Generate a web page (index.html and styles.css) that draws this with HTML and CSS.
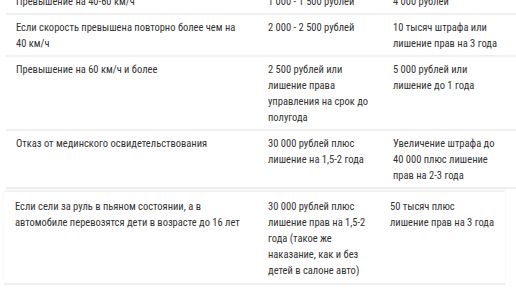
FILE: index.html
```html
<!DOCTYPE html>
<html lang="ru">
<head>
<meta charset="utf-8">
<link rel="stylesheet" href="styles.css">
</head>
<body>
<div class="page">
  <table class="fines fines-main">
    <colgroup><col class="c1"><col class="c2"><col class="c3"></colgroup>
    <tr><td>Превышение на 40-60 км/ч</td><td>1 000 - 1 500 рублей</td><td>4 000 рублей</td></tr>
    <tr><td>Если скорость превышена повторно более чем на 40 км/ч</td><td>2 000 - 2 500 рублей</td><td>10 тысяч штрафа или лишение прав на 3 года</td></tr>
    <tr><td>Превышение на 60 км/ч и более</td><td>2 500 рублей или лишение права управления на срок до полугода</td><td>5 000 рублей или лишение до 1 года</td></tr>
    <tr><td>Отказ от мединского освидетельствования</td><td>30 000 рублей плюс лишение на 1,5-2 года</td><td>Увеличение штрафа до 40 000 плюс лишение прав на 2-3 года</td></tr>
  </table>
  <table class="fines fines-extra">
    <colgroup><col class="d1"><col class="d2"><col class="d3"></colgroup>
    <tr><td>Если сели за руль в пьяном состоянии, а в автомобиле перевозятся дети в возрасте до 16 лет</td><td>30 000 рублей плюс лишение прав на 1,5-2 года (такое же наказание, как и без детей в салоне авто)</td><td>50 тысяч плюс лишение прав на 3 года</td></tr>
  </table>
</div>
</body>
</html>
```

FILE: styles.css
```css
html, body {
  margin: 0;
  padding: 0;
  background: #fff;
}
.page {
  margin-top: -11px;
  overflow: hidden;
  width: 516px;
}
.fines {
  border-collapse: collapse;
  table-layout: fixed;
  font-family: Roboto, "Noto Sans", sans-serif;
  font-stretch: 80%;
  font-size: 10.5px;
  line-height: 16px;
  color: #333;
}
.fines td {
  vertical-align: top;
  padding: 5px 10px 3px 10px;
  border-bottom: 2px solid #efefef;
}
.fines-main {
  margin-left: 6px;
  width: 512px;
}
.c1 { width: 252px; }
.c2 { width: 125px; }
.c3 { width: 135px; }
.fines-main td:last-child { padding-right: 15px; }
.fines-extra {
  margin-left: 4px;
  margin-top: 3px;
  width: 501px;
  box-shadow: 0 -2px 2px #f0f0f0;
}
.fines-extra td {
  padding-top: 7px;
  padding-bottom: 4px;
}
.fines-extra td:first-child { padding-left: 11px; }
.d1 { width: 254px; }
.d2 { width: 122px; }
.d3 { width: 125px; }
```
